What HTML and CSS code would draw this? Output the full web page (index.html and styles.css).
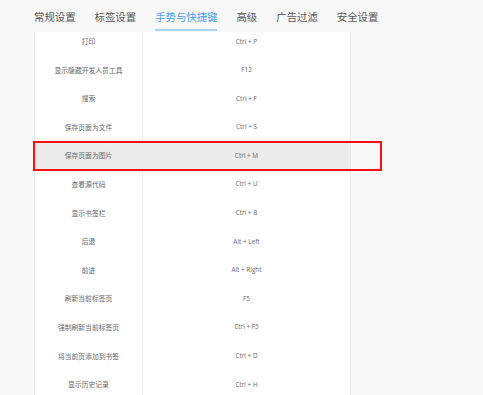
FILE: index.html
```html
<!DOCTYPE html>
<html lang="zh-CN">
<head>
<meta charset="utf-8">
<link rel="stylesheet" href="styles.css">
</head>
<body>
<div class="page">
  <nav class="tabs">
    <span class="tab">常规设置</span>
    <span class="tab">标签设置</span>
    <span class="tab active">手势与快捷键</span>
    <span class="tab">高级</span>
    <span class="tab">广告过滤</span>
    <span class="tab">安全设置</span>
  </nav>
  <div class="panel">
    <div class="list">
      <div class="row"><span class="name">打印</span><span class="key">Ctrl + P</span></div>
      <div class="row"><span class="name">显示隐藏开发人员工具</span><span class="key">F12</span></div>
      <div class="row"><span class="name">搜索</span><span class="key">Ctrl + F</span></div>
      <div class="row"><span class="name">保存页面为文件</span><span class="key">Ctrl + S</span></div>
      <div class="row hl"><span class="name">保存页面为图片</span><span class="key">Ctrl + M</span></div>
      <div class="row"><span class="name">查看源代码</span><span class="key">Ctrl + U</span></div>
      <div class="row"><span class="name">显示书签栏</span><span class="key">Ctrl + B</span></div>
      <div class="row"><span class="name">后退</span><span class="key">Alt + Left</span></div>
      <div class="row"><span class="name">前进</span><span class="key">Alt + Right</span></div>
      <div class="row"><span class="name">刷新当前标签页</span><span class="key">F5</span></div>
      <div class="row"><span class="name">强制刷新当前标签页</span><span class="key">Ctrl + F5</span></div>
      <div class="row"><span class="name">将当前页添加到书签</span><span class="key">Ctrl + D</span></div>
      <div class="row"><span class="name">显示历史记录</span><span class="key">Ctrl + H</span></div>
    </div>
  </div>
  <div class="mark"></div>
</div>
</body>
</html>
```
FILE: styles.css
```css
html, body {
  margin: 0;
  padding: 0;
}
body {
  background: #f8f8f8;
  font-family: "Noto Sans CJK SC", "Open Sans", sans-serif;
}
.page {
  position: relative;
  width: 483px;
  height: 395px;
  overflow: hidden;
}
.tabs {
  display: flex;
  gap: 19px;
  height: 32px;
  padding-left: 34px;
  box-sizing: border-box;
}
.tab {
  font-size: 10.4px;
  line-height: 10.4px;
  color: #555;
  padding-top: 12px;
  height: 31px;
  box-sizing: border-box;
}
.tab.active {
  color: #4a9ff0;
  border-bottom: 2px solid #a6d3fb;
}
.panel {
  margin-left: 34px;
  width: 317px;
  height: 363px;
  overflow: hidden;
  background: #fff;
  border-left: 1px solid #e8e8e8;
  border-right: 1px solid #e8e8e8;
  box-sizing: border-box;
}
.list {
  margin-top: -5.3px;
}
.row {
  display: grid;
  grid-template-columns: 108px 1fr;
  height: 28.6px;
  align-items: stretch;
}
.row.hl {
  background: #ebebeb;
}
.name, .key {
  display: flex;
  align-items: center;
  justify-content: center;
  color: #666;
}
.name {
  font-size: 6.8px;
  border-right: 1px solid #eeeeee;
}
.key {
  font-family: "Open Sans", "Noto Sans", sans-serif;
  font-size: 6.4px;
}
.mark {
  position: absolute;
  left: 33px;
  top: 141px;
  width: 349px;
  height: 30px;
  border: 2px solid #ff1010;
  box-sizing: border-box;
}
```
